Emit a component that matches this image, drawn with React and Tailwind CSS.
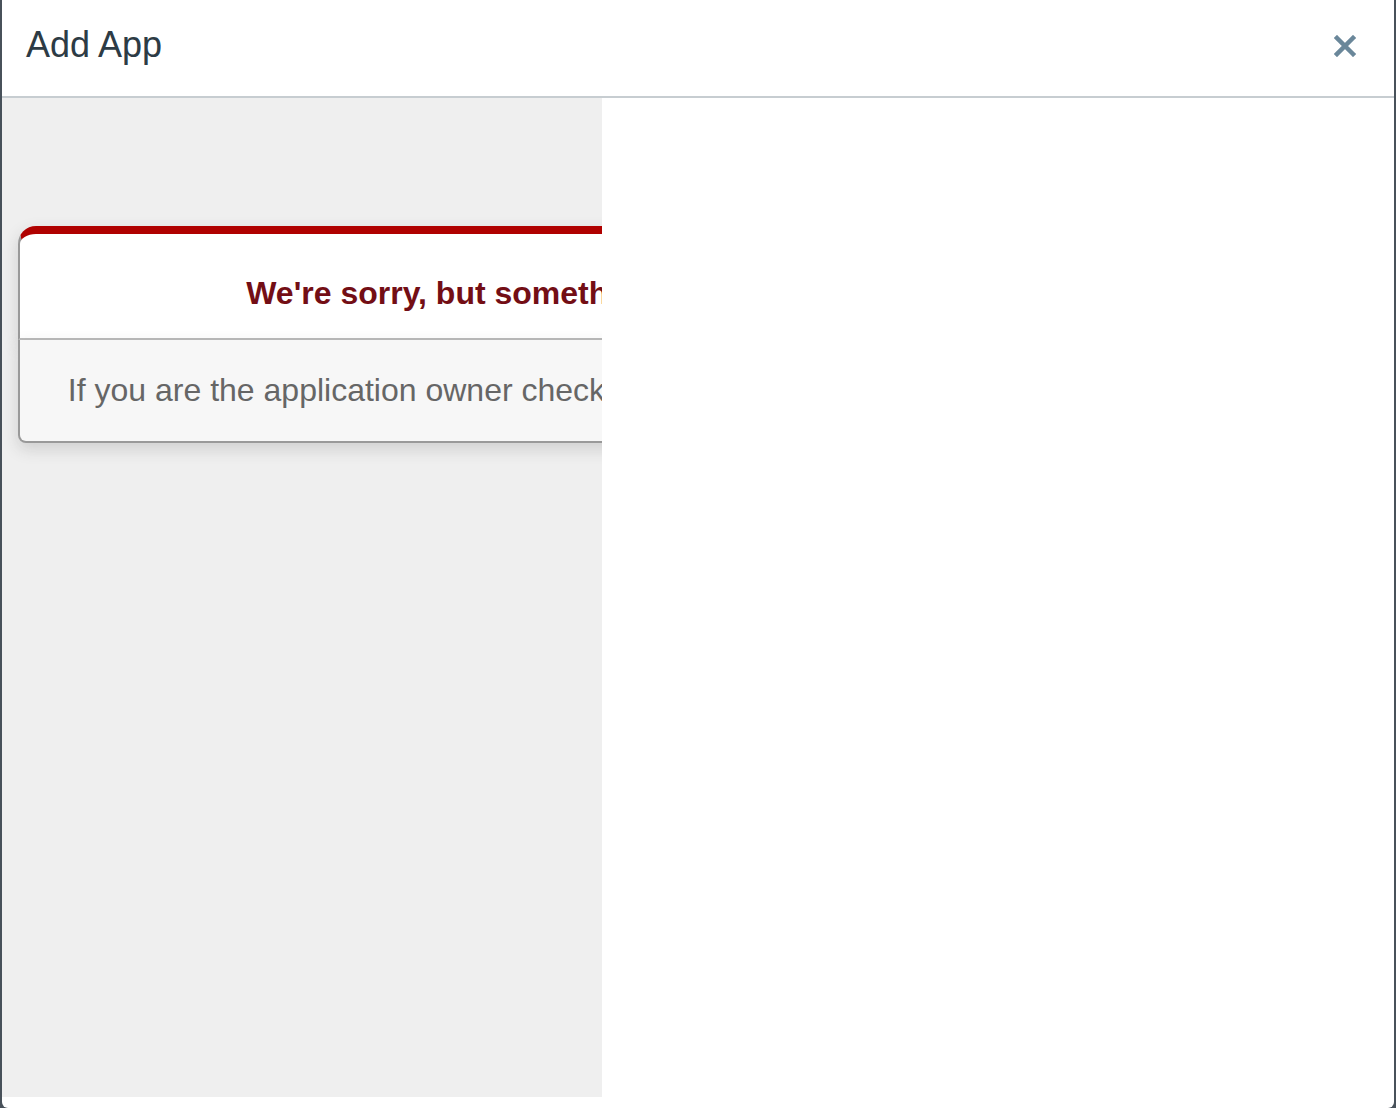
import React from 'react';

const CloseIcon = () => (
    <svg width="22" height="22" viewBox="0 0 22 22" aria-hidden="true">
        <path d="M3 3 L19 19 M19 3 L3 19" stroke="#6a879a" strokeWidth="4.5" strokeLinecap="square" />
    </svg>
);

// the tool's iframe: the Rails 500 page, clipped by the 600px frame
const ErrorPage = () => (
    <div className="w-[600px] h-[999px] overflow-hidden bg-[#efefef] pt-[128px] text-center" style={{ fontFamily: 'Arial, "Liberation Sans", sans-serif' }}>
        <div className="ml-[16px] w-[1062px]">
            <div className="bg-white border-t-[8px] border-t-[#b00100] border-x-2 border-x-[#999] border-b-2 border-b-[#bbb] rounded-t-[18px] pt-[14px] px-[12%] shadow-[0_6px_16px_rgba(50,50,50,0.17)]">
                <h1 className="my-[21px] text-[32px] leading-[48px] font-bold text-[#730e15] whitespace-nowrap">
                    We're sorry, but something went wrong.
                </h1>
            </div>
            <p className="mb-[32px] p-[32px] bg-[#f7f7f7] border-2 border-t-0 border-x-[#999] border-b-[#999] rounded-b-[8px] text-[32px] leading-[37px] text-[#666] shadow-[0_6px_16px_rgba(50,50,50,0.17)] whitespace-nowrap">
                If you are the application owner check the logs for more information.
            </p>
        </div>
    </div>
);

export default function App() {
    return (
        <div className="w-[1396px] h-[1108px] bg-[#48515a] px-[2px] flex overflow-hidden">
            <div className="flex-1 flex flex-col bg-white rounded-b-[6px] overflow-hidden">
                <div className="h-[98px] shrink-0 flex items-center justify-between border-b-2 border-[#c7cdd1] pl-[24px] pr-[38px]">
                    <h2 className="text-[36px] text-[#2d3b45] leading-none pb-[6px]" style={{ fontFamily: '"Liberation Sans", Arial, sans-serif' }}>
                        Add App
                    </h2>
                    <button type="button" className="flex items-center justify-center pb-[4px]">
                        <CloseIcon />
                    </button>
                </div>
                <div className="flex-1">
                    <ErrorPage />
                </div>
            </div>
        </div>
    );
}
